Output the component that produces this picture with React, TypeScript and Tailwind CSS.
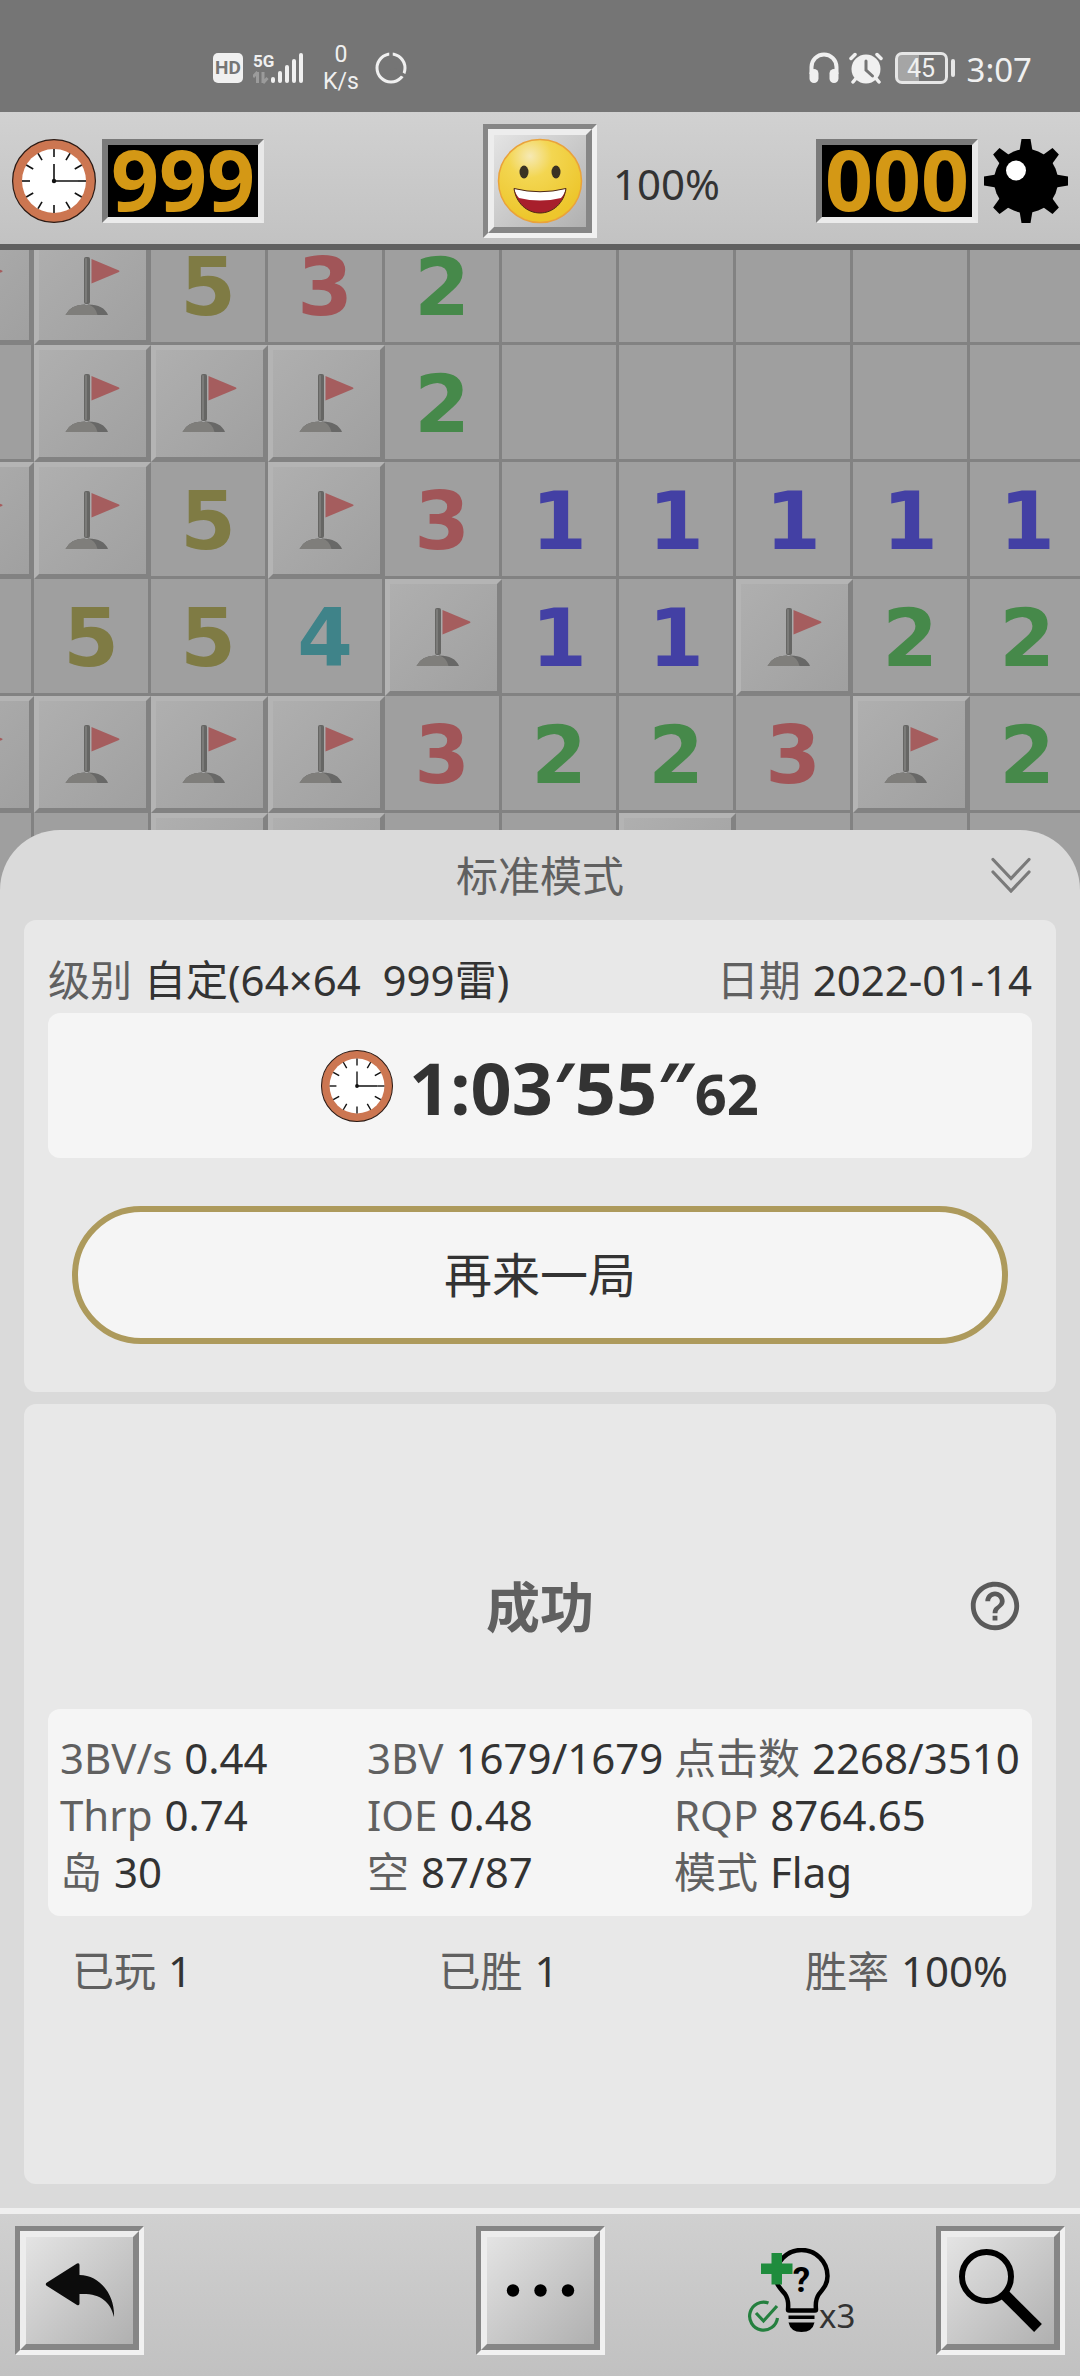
import type { ReactNode } from "react";
import { MdHelpOutline } from "react-icons/md";

// "F" is a flagged cell, "." an opened empty cell
const board = [
  "FF532.....",
  ".FFF2.....",
  "FF5F311111",
  ".554F11F22",
  "FFFF3223F2",
  "..FF..F...",
];

const digitColors: Record<string, string> = {
  "1": "text-[#4340a4]",
  "2": "text-[#46894a]",
  "3": "text-[#a15558]",
  "4": "text-[#3f8389]",
  "5": "text-[#7f7b44]",
};

const stats = [
  ["3BV/s", "0.44"],
  ["3BV", "1679/1679"],
  ["点击数", "2268/3510"],
  ["Thrp", "0.74"],
  ["IOE", "0.48"],
  ["RQP", "8764.65"],
  ["岛", "30"],
  ["空", "87/87"],
  ["模式", "Flag"],
];

const totals = [
  ["已玩", "1"],
  ["已胜", "1"],
  ["胜率", "100%"],
];

function ClockIcon({ className = "" }: { className?: string }) {
  const ticks = [0, 30, 60, 90, 120, 150, 180, 210, 240, 270, 300, 330];
  return (
    <svg viewBox="0 0 84 84" className={className} aria-hidden="true">
      <circle cx="42" cy="42" r="41.4" fill="#cc7651" stroke="#2b1a14" strokeWidth="1.2" />
      <circle cx="42" cy="42" r="32" fill="#fff" />
      <g stroke="#111" strokeWidth="1.6">
        {ticks.map((deg) => (
          <path key={deg} d="M42 10v8" transform={`rotate(${deg} 42 42)`} />
        ))}
        <path d="M42 25v17h24" fill="none" />
      </g>
      <circle cx="42" cy="42" r="2.2" fill="#111" />
    </svg>
  );
}

function MineIcon() {
  const spikes = [0, 45, 90, 135, 180, 225, 270, 315];
  return (
    <svg viewBox="0 0 84 84" className="size-[84px]" aria-hidden="true">
      <circle cx="42" cy="42" r="32" />
      {spikes.map((deg) => (
        <path key={deg} d="M37.5 0h9l2.5 15h-14z" transform={`rotate(${deg} 42 42)`} />
      ))}
      <circle cx="32" cy="31.5" r="10" fill="#fff" />
    </svg>
  );
}

function SmileIcon() {
  return (
    <svg viewBox="0 0 92 92" className="size-[92px]" aria-hidden="true">
      <defs>
        <radialGradient id="face" cx="0.38" cy="0.2" r="0.75">
          <stop offset="0" stopColor="#f6e9b4" />
          <stop offset="0.35" stopColor="#f3d651" />
          <stop offset="1" stopColor="#edc62c" />
        </radialGradient>
      </defs>
      <circle cx="46" cy="46" r="41.5" fill="url(#face)" stroke="#eaa23a" strokeWidth="1.5" />
      <ellipse cx="30" cy="37" rx="4.5" ry="6.5" fill="#3a3223" />
      <ellipse cx="62" cy="37" rx="4.5" ry="6.5" fill="#3a3223" />
      <path d="M20 53.5Q46 60 72 53.5C70 68 59 78 46 78S22 68 20 53.5Z" fill="#a81f2c" />
      <path d="M20 53.5Q46 60 72 53.5Q70 60 67 63Q46 68 25 63Q22 60 20 53.5Z" fill="#fff" />
      <path d="M20 53.5Q46 60 72 53.5C70 68 59 78 46 78S22 68 20 53.5Z" fill="none" stroke="#4d2a14" />
    </svg>
  );
}

function FlagIcon() {
  return (
    <svg viewBox="5 5 107 107" className="size-full" aria-hidden="true">
      <path d="M57.5 31v24.5L85 44q1-1 0-1.5z" fill="#a55d5e" />
      <rect x="50" y="29" width="6" height="47" rx="2" fill="#666664" />
      <rect x="51" y="30" width="2" height="45" rx="1" fill="#7b7b79" />
      <path d="M31.5 87q5-10.5 19-10.5l2 1 2-1q15 0 19.5 10.5z" fill="#686867" />
      <path d="M31.5 87q5-10.5 19-10.5l2 1 2-1q7 2 9 10.5z" fill="#7f7e7b" />
    </svg>
  );
}

function Cell({ value }: { value: string }) {
  if (value === "F") {
    return (
      <div className="size-[117px] border-[5px] border-t-[#b4b4b4] border-r-[#828282] border-b-[#828282] border-l-[#b4b4b4] bg-linear-to-br from-[#afafaf] to-[#a0a0a0]">
        <FlagIcon />
      </div>
    );
  }
  return (
    <div className="flex size-[117px] items-center justify-center border-r-[3px] border-b-[3px] border-[#828282] bg-[#9f9f9f] pt-[6px]">
      {value !== "." && (
        <span className={`font-['DejaVu_Sans',sans-serif] text-[80px] leading-[72px] font-bold ${digitColors[value]}`}>
          {value}
        </span>
      )}
    </div>
  );
}

function Led({ value }: { value: string }) {
  return (
    <div className="flex h-[84px] w-[162px] items-center justify-center border-[6px] border-t-[#7a7a7a] border-r-[#e8e8e8] border-b-[#ebebeb] border-l-[#7a7a7a] bg-black pb-1">
      <span className="text-[84px] leading-[68px] font-bold text-[#d49815]">{value}</span>
    </div>
  );
}

function BevelButton({ label, children }: { label: string; children: ReactNode }) {
  return (
    <button
      type="button"
      aria-label={label}
      className="shrink-0 border-[5px] border-t-[#868686] border-r-[#f1f1f1] border-b-[#f1f1f1] border-l-[#868686]"
    >
      <span className="block border-[6px] border-t-[#ededed] border-r-[#868686] border-b-[#868686] border-l-[#ededed] bg-linear-to-br from-[#e4e4e4] to-[#b0b0b0]">
        {children}
      </span>
    </button>
  );
}

function StatusBar() {
  return (
    <header className="flex h-[112px] items-center justify-between bg-[#757575] pt-6 pr-12 pl-[213px] text-[#f0f0f0]">
      <div className="flex items-center">
        <span className="flex size-[30px] items-center justify-center rounded-[5px] bg-[#f0f0f0] font-['Roboto',sans-serif] text-[19px] font-bold text-[#757575]">
          HD
        </span>
        <svg viewBox="0 0 50 32" className="ml-[10px] h-8 w-[50px]" aria-hidden="true">
          <text x="0" y="15" fontFamily="Roboto, sans-serif" fontSize="17" fontWeight="700" fill="#f0f0f0">
            5G
          </text>
          <path d="M4.5 20v11M0 25l4.5-5M10 20v11M10 31l4.5-5" stroke="#9b9b9b" strokeWidth="3" fill="none" />
          <g fill="#f0f0f0">
            <rect x="18" y="25" width="4" height="6" rx="2" />
            <rect x="25" y="19" width="4" height="12" rx="2" />
            <rect x="32" y="13" width="4" height="18" rx="2" />
            <rect x="39" y="7" width="4" height="24" rx="2" />
            <rect x="46" y="1" width="4" height="30" rx="2" />
          </g>
        </svg>
        <span className="ml-5 text-center font-['Roboto',sans-serif] text-[23px] leading-[27px]">
          0<br />
          K/s
        </span>
        <svg viewBox="0 0 32 32" className="ml-4 size-8" aria-hidden="true">
          <circle cx="16" cy="16" r="14" fill="none" stroke="#f0f0f0" strokeWidth="3" />
          <path d="M16 16V0M16 16l16 9" stroke="#757575" strokeWidth="3.5" />
        </svg>
      </div>
      <div className="flex items-center">
        <svg viewBox="0 0 30 32" className="h-8 w-[30px]" aria-hidden="true">
          <path d="M2.5 22v-7a12.5 12.5 0 0 1 25 0v7" fill="none" stroke="#f0f0f0" strokeWidth="4" />
          <rect x="0.5" y="17" width="9" height="14" rx="4.5" fill="#f0f0f0" />
          <rect x="20.5" y="17" width="9" height="14" rx="4.5" fill="#f0f0f0" />
        </svg>
        <svg viewBox="0 0 34 32" className="ml-[10px] h-8 w-[34px]" aria-hidden="true">
          <circle cx="17" cy="17" r="14.5" fill="#f0f0f0" />
          <path d="M2 6.5l4-4M32 6.5l-4-4M6.5 27l-2.5 3M27.5 27l2.5 3" stroke="#f0f0f0" strokeWidth="3.5" strokeLinecap="round" />
          <path d="M17 9v9l6.5 6" fill="none" stroke="#757575" strokeWidth="3" strokeLinecap="round" />
        </svg>
        <span className="ml-3 flex h-8 w-[53px] items-center justify-center rounded-[7px] border-[3px] border-[#e6e6e6] bg-linear-to-r from-[#a5a5a5] from-45% to-[#757575] to-45% font-['Roboto',sans-serif] text-[25px] leading-none">
          45
        </span>
        <span className="ml-[3px] h-[18px] w-1 rounded-full bg-[#e6e6e6]" />
        <span className="ml-3 pt-1 text-[33px] leading-8">3:07</span>
      </div>
    </header>
  );
}

function HintButton() {
  return (
    <button type="button" aria-label="提示" className="flex items-end">
      <svg viewBox="0 0 84 86" className="h-[86px] w-[84px] shrink-0" aria-hidden="true">
        <path
          d="M41 61.5q1-10-3-15.5C33 40 28.5 36 28.5 28a26 26 0 0 1 52 0c0 8-3.5 12-8.5 18q-4 5.5-3 15.5q0 1-1 1H42q-1 0-1-1z"
          fill="none"
          stroke="#000"
          strokeWidth="4.5"
        />
        <path d="M41.5 67.5h26V71h-26zM41.5 74.5h26q-2 9.5-13 9.5t-13-9.5z" />
        <text x="54.5" y="44" textAnchor="middle" fontFamily="Roboto, sans-serif" fontSize="35" fontWeight="700">
          ?
        </text>
        <path d="M24.5 5H35v10.5h10.5V26H35v10.5H24.5V26H14V15.5h10.5z" fill="#1f8c3d" />
        <path d="M21.5 55a14 14 0 1 0 9 15M9 65l7.5 8 13.5-15" fill="none" stroke="#25803f" strokeWidth="3.2" />
      </svg>
      <span className="-ml-3 pb-[2px] text-[33px] leading-none text-[#333]">x3</span>
    </button>
  );
}

export default function App() {
  return (
    <div className="flex min-h-screen flex-col bg-[#dadada] font-['Noto_Sans','Noto_Sans_CJK_SC',sans-serif] text-[42px] text-[#333]">
      <StatusBar />

      <div className="grid grid-cols-[1fr_auto_1fr] items-center border-b-[6px] border-[#606060] bg-linear-to-b from-[#d1d1d1] to-[#c2c2c2] px-3 pt-3 pb-[6px]">
        <div className="flex items-center gap-[6px]">
          <ClockIcon className="size-[84px]" />
          <Led value="999" />
        </div>
        <BevelButton label="新游戏">
          <SmileIcon />
        </BevelButton>
        <div className="flex items-center justify-between pl-4">
          <span className="pt-1">100%</span>
          <div className="flex items-center gap-[6px]">
            <Led value="000" />
            <MineIcon />
          </div>
        </div>
      </div>

      <div className="h-[640px] overflow-hidden bg-[#9f9f9f]">
        <div className="-mt-[22px] -ml-[83px] grid w-max grid-cols-10">
          {board.map((row, y) => row.split("").map((value, x) => <Cell key={`${x}-${y}`} value={value} />))}
        </div>
      </div>

      <main className="relative -mt-[60px] flex flex-1 flex-col rounded-t-[60px] bg-[#dadada] px-6 pb-6">
        <div className="grid h-[90px] grid-cols-[1fr_auto_1fr] items-center">
          <h1 className="col-start-2 text-[#606060]">标准模式</h1>
          <button type="button" aria-label="收起" className="mr-6 justify-self-end">
            <svg viewBox="0 0 42 36" className="h-9 w-[42px]" fill="none" stroke="#7a7a7a" strokeWidth="3.2" strokeLinecap="round">
              <path d="M3 2.5l18 19 18-19M3 15l18 19 18-19" />
            </svg>
          </button>
        </div>

        <section className="rounded-xl bg-[#e8e8e8] px-6 pt-[30px] pb-12">
          <div className="flex justify-between pb-[3px] leading-[60px]">
            <p className="flex gap-3">
              <span className="text-[#606060]">级别</span>
              <span className="whitespace-pre">自定(64×64  999雷)</span>
            </p>
            <p className="flex gap-3">
              <span className="text-[#606060]">日期</span>
              <span>2022-01-14</span>
            </p>
          </div>
          <div className="flex h-[145px] items-center justify-center gap-4 rounded-xl bg-[#f5f5f5]">
            <ClockIcon className="size-[72px]" />
            <p className="pt-2 text-[72px] leading-[96px] font-bold">
              1:03′55″<span className="text-[56px]">62</span>
            </p>
          </div>
          <div className="px-6 pt-12">
            <button type="button" className="h-[138px] w-full rounded-full border-[6px] border-[#ad9a5c] bg-[#f5f5f5] text-[48px]">
              再来一局
            </button>
          </div>
        </section>

        <section className="mt-3 flex-1 rounded-xl bg-[#e8e8e8] px-6 pt-[170px]">
          <div className="grid grid-cols-[1fr_auto_1fr] items-center">
            <h2 className="col-start-2 pt-[3px] text-[54px] leading-[60px] font-bold text-[#606060]">成功</h2>
            <button type="button" aria-label="帮助" className="mr-2 justify-self-end text-[#5a5a5a]">
              <MdHelpOutline size={58} />
            </button>
          </div>
          <dl className="mt-[72px] grid grid-cols-[307fr_307fr_346fr] rounded-xl bg-[#f5f5f5] px-3 pt-5 pb-4 leading-[57px]">
            {stats.map(([name, value]) => (
              <div key={name} className="flex gap-3 whitespace-nowrap">
                <dt className="text-[#606060]">{name}</dt>
                <dd>{value}</dd>
              </div>
            ))}
          </dl>
          <dl className="mt-[26px] flex justify-between px-6 leading-[57px]">
            {totals.map(([name, value]) => (
              <div key={name} className="flex gap-3">
                <dt className="text-[#606060]">{name}</dt>
                <dd>{value}</dd>
              </div>
            ))}
          </dl>
        </section>
      </main>

      <nav className="grid grid-cols-[auto_minmax(0,1fr)_auto_minmax(0,1fr)_auto] items-center border-t-[6px] border-[#efefef] bg-linear-to-b from-[#d0d0d0] to-[#c1c1c1] px-[15px] pt-3 pb-[21px]">
        <BevelButton label="返回">
          <svg viewBox="0 0 107 107" className="size-[107px]" aria-hidden="true">
            <path
              d="M21 45.5L51 26.5q2.5-1 2.5 1.5v10C74 38 89 58 88 80C84 64 74 56 53.5 57v9.5q0 2.5-2.5 1.5L21 49q-2.5-2 0-3.5z"
              fill="#0c0c0c"
            />
          </svg>
        </BevelButton>
        <div />
        <BevelButton label="更多">
          <svg viewBox="0 0 107 107" className="size-[107px]" aria-hidden="true">
            <circle cx="26" cy="53.5" r="6.2" />
            <circle cx="53.5" cy="53.5" r="6.2" />
            <circle cx="81" cy="53.5" r="6.2" />
          </svg>
        </BevelButton>
        <div className="flex justify-center pl-[62px]">
          <HintButton />
        </div>
        <BevelButton label="缩放">
          <svg viewBox="0 0 107 107" className="size-[107px]" fill="none" stroke="#000" aria-hidden="true">
            <circle cx="39.5" cy="39.5" r="24.5" strokeWidth="6" />
            <path d="M56 56l35 35" strokeWidth="11" />
          </svg>
        </BevelButton>
      </nav>
    </div>
  );
}
